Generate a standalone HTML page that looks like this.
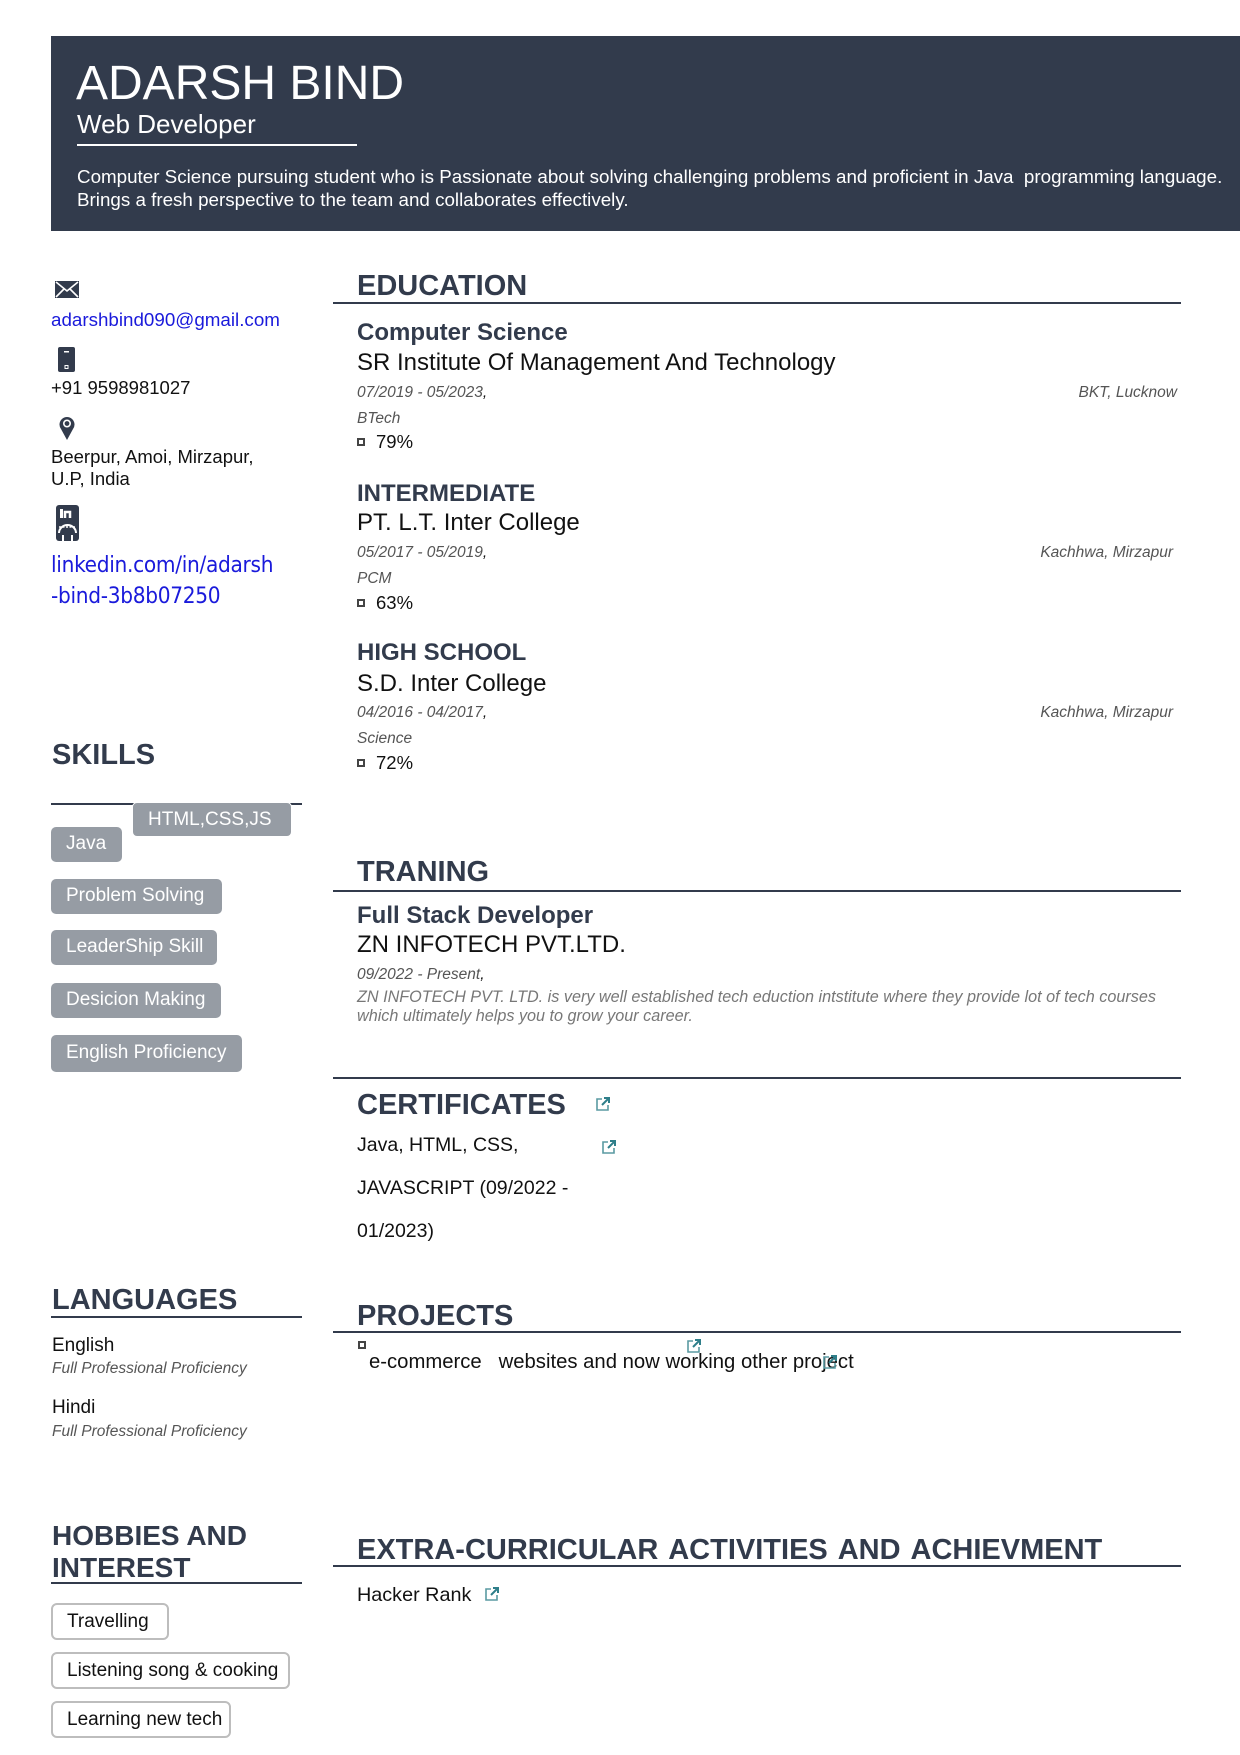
<!DOCTYPE html>
<html><head><meta charset="utf-8">
<style>
*{margin:0;padding:0;box-sizing:border-box}
body{width:1240px;height:1755px;position:relative;background:#fff;font-family:"Liberation Sans",Arial,sans-serif;color:#111;overflow:hidden}
.a{position:absolute;white-space:nowrap;line-height:1}
.hd{position:absolute;left:51px;top:36px;width:1189px;height:195px;background:#323b4c}
.h{position:absolute;font-weight:bold;font-size:29px;color:#323b4c;line-height:1;white-space:nowrap}
.ln{position:absolute;height:2px;background:#323b4c}
.t2{font-weight:bold;font-size:24px;color:#323b4c}
.t3{font-size:24px;color:#111}
.it{font-style:italic;font-size:15.5px;color:#555}
.pill{position:absolute;background:#969ca4;color:#fff;font-size:19px;border-radius:5px;padding:0 15px;line-height:34px;height:35px;white-space:nowrap}
.hb{position:absolute;border:2px solid #bdbdbd;border-radius:6px;font-size:19px;padding:0 14px;line-height:33px;height:37px;white-space:nowrap;color:#111}
.bul{position:absolute;width:8px;height:8px;border:2px solid #444}
.ext{position:absolute;width:16px;height:16px}
a{color:#1a1adb}
</style></head><body>
<div class="hd"></div>
<div class="a" style="left:76px;top:60px;font-size:48px;color:#fff">ADARSH BIND</div>
<div class="a" style="left:77px;top:111px;font-size:26px;color:#fff">Web Developer</div>
<div style="position:absolute;left:77px;top:144px;width:280px;height:2px;background:#fff"></div>
<div class="a" style="left:77px;top:165px;font-size:18.8px;color:#fff;line-height:23px">Computer Science pursuing student who is Passionate about solving challenging problems and proficient in Java&nbsp; programming language.<br>Brings a fresh perspective to the team and collaborates effectively.</div>

<!-- left column -->
<svg style="position:absolute;left:55px;top:281px" width="24" height="17" viewBox="0 0 24 17"><rect width="24" height="17" fill="#323b4c"/><path d="M1 1 L12 10 L23 1 M1 16 L9 8 M23 16 L15 8" stroke="#fff" stroke-width="1.6" fill="none"/></svg>
<div class="a" style="left:51px;top:311px;font-size:18.8px"><a>adarshbind090@gmail.com</a></div>
<svg style="position:absolute;left:58px;top:347px" width="17" height="25" viewBox="0 0 17 25"><rect width="17" height="25" rx="2" fill="#323b4c"/><rect x="6" y="4" width="5" height="1.5" fill="#fff"/><rect x="6.5" y="18" width="4" height="4" fill="#fff"/><rect x="7.5" y="19" width="2" height="2" fill="#323b4c"/></svg>
<div class="a" style="left:51px;top:379px;font-size:18.5px">+91 9598981027</div>
<svg style="position:absolute;left:59px;top:416px" width="16" height="24" viewBox="0 0 16 24"><path d="M8 24 L2 13 A7.5 7.5 0 1 1 14 13 Z" fill="#323b4c"/><circle cx="8" cy="7.5" r="3.2" fill="none" stroke="#fff" stroke-width="1.6"/></svg>
<div class="a" style="left:51px;top:446px;font-size:18.5px;line-height:22px">Beerpur, Amoi, Mirzapur,<br>U.P, India</div>
<svg style="position:absolute;left:56px;top:505px" width="23" height="36" viewBox="0 0 23 36"><rect width="23" height="36" rx="3" fill="#323b4c"/><rect x="4" y="4" width="3" height="9" fill="#fff"/><path d="M9 13 V7 H14 V13" fill="none" stroke="#fff" stroke-width="2.5"/><path d="M3 28 A8.5 8 0 0 1 20 28" fill="none" stroke="#fff" stroke-width="2"/><path d="M3 22 H20" stroke="#fff" stroke-width="1.5" stroke-dasharray="2 1.5"/><path d="M7 36 V30 M16 36 V30" stroke="#fff" stroke-width="2"/></svg>
<div class="a" style="left:51px;top:550px;font-size:22.4px;line-height:31px;font-family:'DejaVu Sans Condensed','DejaVu Sans',sans-serif;letter-spacing:-0.3px"><a>linkedin.com/in/adarsh<br>-bind-3b8b07250</a></div>

<div class="h" style="left:52px;top:741px">SKILLS</div>
<div class="ln" style="left:51px;top:803px;width:251px"></div>
<div class="pill" style="left:132px;top:802px;border:1px solid #fff;width:160px">HTML,CSS,JS</div>
<div class="pill" style="left:51px;top:827px;width:71px">Java</div>
<div class="pill" style="left:51px;top:879px;width:171px">Problem Solving</div>
<div class="pill" style="left:51px;top:930px;width:166px">LeaderShip Skill</div>
<div class="pill" style="left:51px;top:983px;width:170px">Desicion Making</div>
<div class="pill" style="left:51px;top:1035px;width:191px;height:37px;line-height:36px">English Proficiency</div>

<div class="h" style="left:52px;top:1286px">LANGUAGES</div>
<div class="ln" style="left:51px;top:1316px;width:251px"></div>
<div class="a" style="left:52px;top:1336px;font-size:19px">English</div>
<div class="a it" style="left:52px;top:1361px">Full Professional Proficiency</div>
<div class="a" style="left:52px;top:1398px;font-size:19px">Hindi</div>
<div class="a it" style="left:52px;top:1424px">Full Professional Proficiency</div>

<div class="h" style="left:52px;top:1520px;line-height:32px;font-size:28px">HOBBIES AND<br>INTEREST</div>
<div class="ln" style="left:51px;top:1582px;width:251px"></div>
<div class="hb" style="left:51px;top:1603px;width:118px">Travelling</div>
<div class="hb" style="left:51px;top:1652px;width:239px">Listening song &amp; cooking</div>
<div class="hb" style="left:51px;top:1701px;width:180px">Learning new tech</div>

<!-- right column -->
<div class="h" style="left:357px;top:272px">EDUCATION</div>
<div class="ln" style="left:333px;top:302px;width:848px"></div>
<div class="a t2" style="left:357px;top:321px">Computer Science</div>
<div class="a t3" style="left:357px;top:351px">SR Institute Of Management And Technology</div>
<div class="a it" style="left:357px;top:385px">07/2019 - 05/2023<span style="color:#111">,</span></div>
<div class="a it" style="right:63px;top:385px">BKT, Lucknow</div>
<div class="a it" style="left:357px;top:411px">BTech</div>
<div class="bul" style="left:357px;top:438px"></div>
<div class="a" style="left:376px;top:433px;font-size:18.5px">79%</div>

<div class="a t2" style="left:357px;top:482px">INTERMEDIATE</div>
<div class="a t3" style="left:357px;top:511px">PT. L.T. Inter College</div>
<div class="a it" style="left:357px;top:545px">05/2017 - 05/2019<span style="color:#111">,</span></div>
<div class="a it" style="right:67px;top:545px">Kachhwa, Mirzapur</div>
<div class="a it" style="left:357px;top:571px">PCM</div>
<div class="bul" style="left:357px;top:599px"></div>
<div class="a" style="left:376px;top:594px;font-size:18.5px">63%</div>

<div class="a t2" style="left:357px;top:641px">HIGH SCHOOL</div>
<div class="a t3" style="left:357px;top:672px">S.D. Inter College</div>
<div class="a it" style="left:357px;top:705px">04/2016 - 04/2017<span style="color:#111">,</span></div>
<div class="a it" style="right:67px;top:705px">Kachhwa, Mirzapur</div>
<div class="a it" style="left:357px;top:731px">Science</div>
<div class="bul" style="left:357px;top:759px"></div>
<div class="a" style="left:376px;top:754px;font-size:18.5px">72%</div>

<div class="h" style="left:357px;top:858px">TRANING</div>
<div class="ln" style="left:333px;top:890px;width:848px"></div>
<div class="a t2" style="left:357px;top:904px">Full Stack Developer</div>
<div class="a t3" style="left:357px;top:933px">ZN INFOTECH PVT.LTD.</div>
<div class="a it" style="left:357px;top:967px">09/2022 - Present<span style="color:#111">,</span></div>
<div class="a it" style="left:357px;top:988px;color:#777;line-height:19px;font-size:16.2px">ZN INFOTECH PVT. LTD. is very well established tech eduction intstitute where they provide lot of tech courses<br>which ultimately helps you to grow your career.</div>

<div class="ln" style="left:333px;top:1077px;width:848px"></div>
<div class="h" style="left:357px;top:1091px">CERTIFICATES</div>
<div class="a" style="left:357px;top:1124px;font-size:19.5px;line-height:43px">Java, HTML, CSS,<br>JAVASCRIPT (09/2022 -<br>01/2023)</div>

<div class="h" style="left:357px;top:1302px">PROJECTS</div>
<div class="ln" style="left:333px;top:1331px;width:848px"></div>
<div class="bul" style="left:358px;top:1341px"></div>
<div class="a" style="left:369px;top:1352px;font-size:20.3px;white-space:pre">e-commerce   websites and now working other project</div>

<div class="h" style="left:357px;top:1536px;word-spacing:3px">EXTRA-CURRICULAR ACTIVITIES AND ACHIEVMENT</div>
<div class="ln" style="left:333px;top:1565px;width:848px"></div>
<div class="a" style="left:357px;top:1586px;font-size:19.8px">Hacker Rank</div>

<!-- external link icons -->
<svg class="ext" style="left:595px;top:1096px" viewBox="0 0 16 16"><path d="M7 3 H2 V14 H13 V9" fill="none" stroke="#5a9aa2" stroke-width="1.6"/><path d="M7 9 L14 2 M9 2 H14 V7" fill="none" stroke="#2f7f8a" stroke-width="2"/></svg>
<svg class="ext" style="left:601px;top:1139px" viewBox="0 0 16 16"><path d="M7 3 H2 V14 H13 V9" fill="none" stroke="#5a9aa2" stroke-width="1.6"/><path d="M7 9 L14 2 M9 2 H14 V7" fill="none" stroke="#2f7f8a" stroke-width="2"/></svg>
<svg class="ext" style="left:686px;top:1338px" viewBox="0 0 16 16"><path d="M7 3 H2 V14 H13 V9" fill="none" stroke="#5a9aa2" stroke-width="1.6"/><path d="M7 9 L14 2 M9 2 H14 V7" fill="none" stroke="#2f7f8a" stroke-width="2"/></svg>
<svg class="ext" style="left:822px;top:1354px" viewBox="0 0 16 16"><path d="M7 3 H2 V14 H13 V9" fill="none" stroke="#5a9aa2" stroke-width="1.6"/><path d="M7 9 L14 2 M9 2 H14 V7" fill="none" stroke="#2f7f8a" stroke-width="2"/></svg>
<svg class="ext" style="left:484px;top:1586px" viewBox="0 0 16 16"><path d="M7 3 H2 V14 H13 V9" fill="none" stroke="#5a9aa2" stroke-width="1.6"/><path d="M7 9 L14 2 M9 2 H14 V7" fill="none" stroke="#2f7f8a" stroke-width="2"/></svg>
</body></html>
